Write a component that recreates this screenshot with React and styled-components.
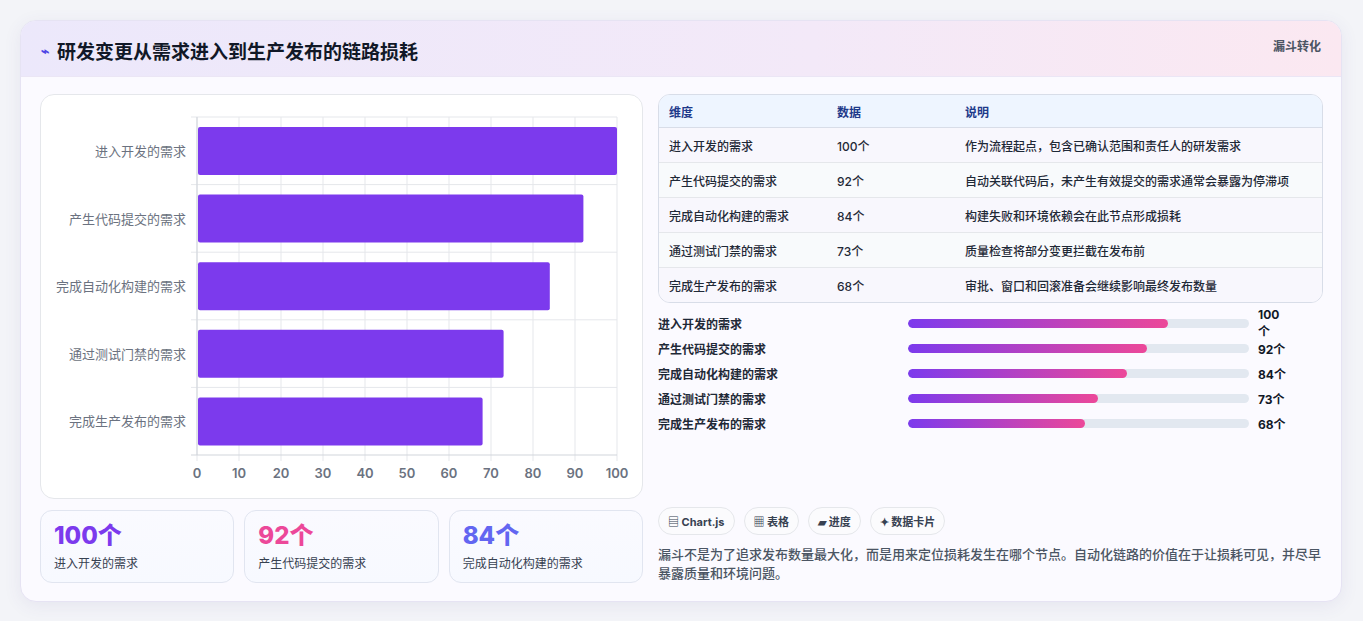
import React from 'react';
import styled, { createGlobalStyle } from 'styled-components';

const GlobalStyle = createGlobalStyle`
  body {
    margin: 0;
    background: #f3f4f8;
    font-family: "Inter", "Noto Sans CJK SC", sans-serif;
  }
`;

const rows = [
  { name: '进入开发的需求', value: 100, note: '作为流程起点，包含已确认范围和责任人的研发需求' },
  { name: '产生代码提交的需求', value: 92, note: '自动关联代码后，未产生有效提交的需求通常会暴露为停滞项' },
  { name: '完成自动化构建的需求', value: 84, note: '构建失败和环境依赖会在此节点形成损耗' },
  { name: '通过测试门禁的需求', value: 73, note: '质量检查将部分变更拦截在发布前' },
  { name: '完成生产发布的需求', value: 68, note: '审批、窗口和回滚准备会继续影响最终发布数量' },
];

const stats = [
  { value: 100, label: '进入开发的需求', color: '#7c3aed' },
  { value: 92, label: '产生代码提交的需求', color: '#ec4899' },
  { value: 84, label: '完成自动化构建的需求', color: '#6366f1' },
];

const BarChart = () => {
  const x0 = 156, x1 = 576, y0 = 22, band = 67.6;
  const sx = (v) => x0 + ((x1 - x0) * v) / 100;
  return (
    <svg width="602" height="403" viewBox="0 0 602 403">
      {Array.from({ length: 11 }, (_, i) => (
        <g key={i}>
          <line x1={sx(i * 10)} x2={sx(i * 10)} y1={y0} y2={y0 + band * 5 + 6} stroke="#e5e7eb" />
          <text x={sx(i * 10)} y={383} textAnchor="middle" fontSize="13" fontWeight="600" fill="#6b7280"
            fontFamily="Inter, sans-serif">{i * 10}</text>
        </g>
      ))}
      {rows.map((r, i) => (
        <g key={r.name}>
          <line x1={x0 - 6} x2={x1} y1={y0 + band * i} y2={y0 + band * i} stroke="#e5e7eb" />
          <rect x={x0 + 1} y={y0 + band * i + 10} width={sx(r.value) - x0 - 1} height={48} fill="#7c3aed" rx="2" />
          <text x={145} y={y0 + band * i + 39} textAnchor="end" fontSize="13" fill="#6b7280"
            fontFamily="'Noto Sans CJK SC', sans-serif">{r.name}</text>
        </g>
      ))}
      <line x1={x0} x2={x0} y1={y0} y2={y0 + band * 5} stroke="#d1d5db" />
      <line x1={x0 - 6} x2={x1} y1={y0 + band * 5} y2={y0 + band * 5} stroke="#d1d5db" />
    </svg>
  );
};

export default function App() {
  return (
    <>
      <GlobalStyle />
      <Page>
        <Card>
          <Header>
            <Title><Bolt>⌁</Bolt>研发变更从需求进入到生产发布的链路损耗</Title>
            <Kind>漏斗转化</Kind>
          </Header>
          <Body>
            <LeftCol>
              <ChartBox><BarChart /></ChartBox>
              <StatRow>
                {stats.map((s) => (
                  <Stat key={s.label}>
                    <StatValue color={s.color}>{s.value}个</StatValue>
                    <StatLabel>{s.label}</StatLabel>
                  </Stat>
                ))}
              </StatRow>
            </LeftCol>
            <RightCol>
              <Table>
                <thead>
                  <tr><Th>维度</Th><Th>数据</Th><Th>说明</Th></tr>
                </thead>
                <tbody>
                  {rows.map((r) => (
                    <tr key={r.name}><Td>{r.name}</Td><Td>{r.value}个</Td><Td>{r.note}</Td></tr>
                  ))}
                </tbody>
              </Table>
              <Progress>
                {rows.map((r) => (
                  <PRow key={r.name}>
                    <PLabel>{r.name}</PLabel>
                    <Track><Fill style={{ width: `${(r.value / 131) * 100}%` }} /></Track>
                    <PValue>{r.value}个</PValue>
                  </PRow>
                ))}
              </Progress>
              <Tags>
                <Tag>▤ Chart.js</Tag>
                <Tag>▦ 表格</Tag>
                <Tag>▰ 进度</Tag>
                <Tag>✦ 数据卡片</Tag>
              </Tags>
              <Para>漏斗不是为了追求发布数量最大化，而是用来定位损耗发生在哪个节点。自动化链路的价值在于让损耗可见，并尽早暴露质量和环境问题。</Para>
            </RightCol>
          </Body>
        </Card>
      </Page>
    </>
  );
}

const Page = styled.div`
  padding: 20px 21px 21px 20px;
  font-family: "Inter", "Noto Sans CJK SC", sans-serif;
`;
const Card = styled.div`
  background: #fbfaff;
  border: 1px solid #e6e3f3;
  border-radius: 16px;
  box-shadow: 0 4px 18px rgba(80, 70, 140, 0.08);
  overflow: hidden;
`;
const Header = styled.div`
  height: 55px;
  display: flex;
  justify-content: space-between;
  align-items: flex-start;
  padding: 0 20px 0 20px;
  background: linear-gradient(90deg, #ece8fb 0%, #f3e9f8 60%, #fbe8f1 100%);
  border-bottom: 1px solid #ebe6f5;
`;
const Title = styled.h1`
  margin: 16px 0 0;
  font-size: 19px;
  font-weight: 700;
  color: #111827;
  display: flex;
  align-items: center;
`;
const Bolt = styled.span`
  color: #4f46e5;
  font-size: 14px;
  margin-right: 8px;
`;
const Kind = styled.span`
  margin-top: 16px;
  font-size: 12px;
  font-weight: 700;
  color: #4b5563;
`;
const Body = styled.div`
  display: flex;
  gap: 15px;
  padding: 17px 18px 18px 19px;
`;
const LeftCol = styled.div`
  width: 603px;
  display: flex;
  flex-direction: column;
  gap: 11px;
`;
const ChartBox = styled.div`
  height: 403px;
  background: #fff;
  border: 1px solid #e5e7eb;
  border-radius: 14px;
  overflow: hidden;
`;
const StatRow = styled.div`
  display: grid;
  grid-template-columns: repeat(3, 1fr);
  gap: 10px;
`;
const Stat = styled.div`
  height: 73px;
  box-sizing: border-box;
  padding: 10px 13px;
  border: 1px solid #e1e5f0;
  border-radius: 12px;
  background: linear-gradient(180deg, #fafaff, #f7f9ff);
`;
const StatValue = styled.div`
  font-size: 24px;
  font-weight: 800;
  line-height: 30px;
  color: ${(p) => p.color};
`;
const StatLabel = styled.div`
  margin-top: 3px;
  font-size: 12px;
  color: #374151;
`;
const RightCol = styled.div`
  flex: 1;
  display: flex;
  flex-direction: column;
`;
const Table = styled.table`
  width: 100%;
  border-collapse: separate;
  border-spacing: 0;
  border: 1px solid #d8dde8;
  border-radius: 12px;
  overflow: hidden;
  font-size: 12px;
  tbody tr:nth-child(odd) td { background: #f8f7fd; }
  tbody tr:nth-child(even) td { background: #f8fafc; }
  tbody tr:last-child td { border-bottom: none; }
  th:nth-child(1), td:nth-child(1) { width: 148px; }
  th:nth-child(2), td:nth-child(2) { width: 108px; }
`;
const Th = styled.th`
  height: 32px;
  padding: 0 10px;
  text-align: left;
  font-weight: 700;
  color: #1e3a8a;
  background: #eef5ff;
  border-bottom: 1px solid #d8dde8;
`;
const Td = styled.td`
  height: 34px;
  padding: 0 10px;
  color: #1f2937;
  font-weight: 500;
  border-bottom: 1px solid #e5e7eb;
`;
const Progress = styled.div`
  display: flex;
  flex-direction: column;
  gap: 7px;
  margin-top: 11px;
`;
const PRow = styled.div`
  display: flex;
  align-items: center;
  height: 18px;
  padding-right: 35px;
`;
const PLabel = styled.span`
  width: 250px;
  font-size: 12px;
  font-weight: 600;
  color: #1f2937;
`;
const Track = styled.div`
  flex: 1;
  height: 9px;
  border-radius: 5px;
  background: #e2e8f0;
  overflow: hidden;
`;
const Fill = styled.div`
  height: 100%;
  border-radius: 5px;
  background: linear-gradient(90deg, #7c3aed, #ec4899);
`;
const PValue = styled.span`
  width: 30px;
  margin-left: 9px;
  font-size: 12px;
  font-weight: 700;
  color: #111827;
`;
const Tags = styled.div`
  display: flex;
  gap: 9px;
  margin-top: 75px;
`;
const Tag = styled.span`
  height: 28px;
  box-sizing: border-box;
  display: inline-flex;
  align-items: center;
  padding: 0 9px;
  border: 1px solid #e5e7eb;
  border-radius: 14px;
  background: #fbfbfd;
  font-size: 11px;
  font-weight: 700;
  color: #374151;
`;
const Para = styled.p`
  margin: 10px 0 0;
  font-size: 13px;
  line-height: 19px;
  font-weight: 500;
  color: #4b5563;
`;
